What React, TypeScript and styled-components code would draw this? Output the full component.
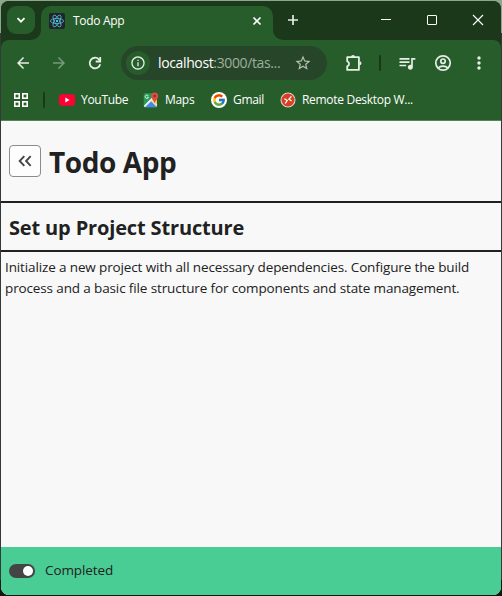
import React from "react";
import styled, { createGlobalStyle } from "styled-components";
import {
  MdArrowBack, MdArrowForward, MdInfoOutline, MdStarBorder,
  MdQueueMusic, MdMoreVert,
} from "react-icons/md";
import { FcGoogle } from "react-icons/fc";

const dark = "#1b381b";
const green = "#275d2b";

const GlobalStyle = createGlobalStyle`
  * { box-sizing: border-box; }
  html, body, #root { height: 100%; margin: 0; }
  body { background: linear-gradient(#8da68f 0 33px, #333a37 33px); overflow: hidden; font-family: "Open Sans", sans-serif; }
  svg { display: block; flex: none; }
  h1, h2, p { margin: 0; }
`;

const Window = styled.div`
  height: 100vh;
  padding: 1px;
  background: linear-gradient(#0000 580px, #111814 580px);
`;
const Frame = styled.div`
  height: 100%;
  display: flex;
  flex-direction: column;
  border-radius: 8px;
  overflow: hidden;
  background: ${dark};
`;
const TabStrip = styled.div`
  height: 39px;
  flex: none;
  display: flex;
  background: ${green};
`;
const StripStart = styled.div`
  width: 40px;
  padding: 5px 6px;
  background: ${dark};
  border-bottom-right-radius: 10px;
`;
const TabSearch = styled.div`
  width: 28px;
  height: 28px;
  border-radius: 9px;
  background: ${green};
  display: grid;
  place-items: center;
`;
const TabSlot = styled.div`
  width: 232px;
  padding-top: 5px;
  background: linear-gradient(${dark} 20px, ${green} 20px);
`;
const Tab = styled.div`
  height: 34px;
  padding: 0 11px 5px 8px;
  display: flex;
  align-items: center;
  border-radius: 10px 10px 0 0;
  background: ${green};
  color: #fff;
`;
const Favicon = styled.div`
  width: 16px;
  height: 16px;
  border-radius: 2px;
  background: #20242b;
  margin-right: 8px;
`;
const TabTitle = styled.span`
  flex: 1;
  padding-top: 1px;
  font-size: 12px;
  line-height: 16px;
  letter-spacing: -0.32px;
`;
const StripEnd = styled.div`
  flex: 1;
  display: flex;
  align-items: center;
  padding: 0 0 1px 14px;
  background: ${dark};
  border-bottom-left-radius: 10px;
`;
const WindowControls = styled.div`
  margin-left: auto;
  display: grid;
  grid-template-columns: repeat(3, 46px);
  justify-items: center;
`;
const Chrome = styled.div`
  height: 81px;
  flex: none;
  background: ${green};
  border-radius: 8px 8px 0 0;
  border-bottom: 1px solid #568359;
  color: #e6eee6;
`;
const Toolbar = styled.div`
  height: 46px;
  padding: 0 4px;
  display: flex;
  align-items: center;
`;
const Slot = styled.div<{ $faded?: boolean }>`
  width: 36px;
  display: grid;
  place-items: center;
  opacity: ${(p) => (p.$faded ? 0.42 : 1)};
`;
const Omnibox = styled.div`
  width: 206px;
  height: 34px;
  margin: 0 9px 0 8px;
  padding: 0 15px 0 5px;
  display: flex;
  align-items: center;
  border-radius: 17px;
  background: #274629;
`;
const SiteInfo = styled.div`
  width: 24px;
  height: 24px;
  margin-right: 8px;
  border-radius: 50%;
  background: ${green};
  display: grid;
  place-items: center;
`;
const Url = styled.span`
  flex: 1;
  white-space: nowrap;
  font-size: 14px;
  line-height: 20px;
  letter-spacing: -0.37px;
  color: #9fae9f;
`;
const Host = styled.span`
  color: #fff;
`;
const Divider = styled.div`
  width: 2px;
  height: 16px;
  flex: none;
  border-radius: 1px;
  background: ${dark};
`;
const ToolbarDivider = styled(Divider)`
  margin: 0 8px 0 7px;
`;
const Bookmarks = styled.div`
  height: 28px;
  padding-left: 13px;
  display: flex;
  align-items: center;
  color: #fff;
`;
const BookmarkDivider = styled(Divider)`
  margin: 0 14px 0 15px;
`;
const Bookmark = styled.div<{ $width: number }>`
  width: ${(p) => p.$width}px;
  display: flex;
  align-items: center;
  gap: 6px;
  white-space: nowrap;
  font-size: 12px;
  line-height: 16px;
  letter-spacing: -0.3px;
`;
const Page = styled.main`
  flex: 1;
  display: flex;
  flex-direction: column;
  background: #f8f8f8;
  color: #212121;
`;
const Header = styled.header`
  height: 82px;
  padding-left: 8px;
  display: flex;
  align-items: center;
  gap: 8px;
  border-bottom: 2px solid #212121;
`;
const BackButton = styled.button`
  width: 32px;
  height: 32px;
  padding: 0;
  display: grid;
  place-items: center;
  border: 1px solid #8b8b8b;
  border-radius: 4px;
  background: #fdfdfd;
  color: #444;
`;
const AppTitle = styled.h1`
  padding-top: 2px;
  font-size: 28px;
  line-height: 36px;
  font-weight: 700;
  letter-spacing: -0.42px;
`;
const TaskTitle = styled.h2`
  height: 49px;
  padding: 0 8px;
  font-size: 20px;
  line-height: 49px;
  font-weight: 700;
  letter-spacing: -0.15px;
  border-bottom: 2px solid #212121;
`;
const Description = styled.p`
  flex: 1;
  padding: 5px 4px;
  font-size: 13.5px;
  line-height: 21px;
  letter-spacing: -0.13px;
  white-space: nowrap;
`;
const StatusBar = styled.footer`
  height: 48px;
  padding-left: 8px;
  display: flex;
  align-items: center;
  gap: 10px;
  background: #4acd94;
  font-size: 13.5px;
  letter-spacing: -0.1px;
`;
const StatusText = styled.span`
  padding-bottom: 2px;
`;
const Switch = styled.div`
  width: 26px;
  height: 14px;
  padding: 2px;
  display: flex;
  justify-content: flex-end;
  border-radius: 7px;
  background: #444;
`;
const Knob = styled.div`
  width: 10px;
  height: 10px;
  border-radius: 50%;
  background: #fff;
`;
const GoogleDisc = styled.span`
  width: 16px;
  height: 16px;
  border-radius: 50%;
  background: #fff;
  display: grid;
  place-items: center;
`;

const ReactLogo = () => (
  <svg width="16" height="16" viewBox="-8 -8 16 16" fill="none" stroke="#57bdd8" strokeWidth="0.8">
    <circle r="1.2" fill="#57bdd8" stroke="none" />
    {[0, 60, 120].map((a) => <ellipse key={a} rx="6.6" ry="2.6" transform={`rotate(${a})`} />)}
  </svg>
);
const ReloadIcon = () => (
  <svg width="16" height="16" viewBox="0 0 16 16" fill="none" stroke="currentColor" strokeWidth="1.8">
    <path d="M13.2 9.2A5.3 5.3 0 1 1 11.9 4.4L13 5.6" />
    <path d="M13.2 2v4.5H8.7" />
  </svg>
);
const PuzzleIcon = () => (
  <svg width="20" height="20" viewBox="0 0 20 20" fill="none">
    <path d="M3.2 4.2h11.7v12.7H3.2v-3.6a2.6 2.6 0 0 0 0-5z" stroke="currentColor" strokeWidth="1.8" strokeLinejoin="round" />
    <path d="M7 4a2 2 0 0 1 4 0zM15.5 8.3a2 2 0 0 1 0 4z" fill="currentColor" />
  </svg>
);
const ProfileIcon = () => (
  <svg width="18" height="18" viewBox="0 0 18 18" fill="none" stroke="currentColor" strokeWidth="1.7">
    <circle cx="9" cy="9" r="7.2" />
    <circle cx="9" cy="7.2" r="2.2" />
    <path d="M4 14c1.4-1.3 3.1-1.9 5-1.9s3.6.6 5 1.9" />
  </svg>
);
const BackIcon = () => (
  <svg width="14" height="12" viewBox="0 0 14 12" fill="none" stroke="currentColor" strokeWidth="1.9">
    <path d="M6.3 1.2 1.7 6l4.6 4.8M12.7 1.2 8.1 6l4.6 4.8" />
  </svg>
);
const YouTubeIcon = () => (
  <svg width="16" height="16" viewBox="0 0 16 16">
    <rect y="2.2" width="16" height="11.6" rx="3" fill="#ff0033" />
    <path d="M6.3 5.6v4.8L10.6 8z" fill="#fff" />
  </svg>
);
const MapsIcon = () => (
  <svg width="16" height="16" viewBox="0 0 16 16">
    <rect x=".7" y="1.3" width="13.3" height="14" rx="1.5" fill="#279b55" />
    <path d="M1 14.5 12 3l2 2v9.5z" fill="#f4c63d" />
    <path d="M1.5 15.3 7.6 9l6.2 6.3z" fill="#4688ed" />
    <path d="m8.2 8.8 1.2-1.1L14 12.4v2.4z" fill="#dfe4e5" />
    <path d="M.8 13.8 10.5 4l1.5 1.3L2 15.3z" fill="#eee" />
    <path d="M5.4 4.1a1.7 1.7 0 1 0 .1 1.1H4" fill="none" stroke="#fff" strokeWidth=".8" />
    <path d="M11.5 11.5C11.2 8.4 8.2 7.3 8.2 4a3.5 3.5 0 1 1 7 0c0 3.3-3.1 4.4-3.7 7.5z" fill="#df4d40" />
    <circle cx="11.7" cy="4" r="1.2" fill="#852c27" />
  </svg>
);
const RemoteIcon = () => (
  <svg width="16" height="16" viewBox="0 0 16 16">
    <circle cx="8" cy="8" r="7" fill="#d64025" stroke="#e7ccc5" strokeWidth="1.1" />
    <path d="m4.4 6.8 2.8 1.7-2 3M11.4 4.4 8.9 7.1l2.7 2" fill="none" stroke="#fff" strokeWidth="1.3" />
  </svg>
);
const AppsIcon = () => (
  <svg width="14" height="14" viewBox="0 0 14 14" fill="none" stroke="currentColor" strokeWidth="1.6">
    {[[0.8, 0.8], [8.8, 0.8], [0.8, 8.8], [8.8, 8.8]].map(([x, y]) => (
      <rect key={`${x}-${y}`} x={x} y={y} width="4.4" height="4.4" />
    ))}
  </svg>
);

export default function App() {
  return (
    <Window>
      <GlobalStyle />
      <Frame>
        <TabStrip>
          <StripStart>
            <TabSearch>
              <svg width="10" height="10" viewBox="0 0 10 10" fill="none" stroke="#fff" strokeWidth="1.8"><path d="m1.5 3.2 3.5 3.5 3.5-3.5" /></svg>
            </TabSearch>
          </StripStart>
          <TabSlot>
            <Tab>
              <Favicon><ReactLogo /></Favicon>
              <TabTitle>Todo App</TabTitle>
              <svg width="10" height="10" viewBox="0 0 10 10" stroke="#fff" strokeWidth="1.7"><path d="m1.5 1.5 7 7m0-7-7 7" /></svg>
            </Tab>
          </TabSlot>
          <StripEnd>
            <svg width="12" height="12" viewBox="0 0 12 12" stroke="#e6eee6" strokeWidth="1.7"><path d="M6 1v10M1 6h10" /></svg>
            <WindowControls>
              <svg width="12" height="12" viewBox="0 0 12 12" stroke="#fff"><path d="M1 5.5h10" /></svg>
              <svg width="12" height="12" viewBox="0 0 12 12" stroke="#fff" fill="none"><rect x="1.5" y="1.5" width="9" height="9" rx=".5" /></svg>
              <svg width="12" height="12" viewBox="0 0 12 12" stroke="#fff" strokeWidth="1.1"><path d="m1 1 10 10m0-10L1 11" /></svg>
            </WindowControls>
          </StripEnd>
        </TabStrip>
        <Chrome>
          <Toolbar>
            <Slot><MdArrowBack size={18} /></Slot>
            <Slot $faded><MdArrowForward size={18} /></Slot>
            <Slot><ReloadIcon /></Slot>
            <Omnibox>
              <SiteInfo><MdInfoOutline size={16} /></SiteInfo>
              <Url><Host>localhost</Host>:3000/tas...</Url>
              <MdStarBorder size={18} color="#b3c0b3" />
            </Omnibox>
            <Slot><PuzzleIcon /></Slot>
            <ToolbarDivider />
            <Slot><MdQueueMusic size={20} /></Slot>
            <Slot><ProfileIcon /></Slot>
            <Slot><MdMoreVert size={20} /></Slot>
          </Toolbar>
          <Bookmarks>
            <AppsIcon />
            <BookmarkDivider />
            <Bookmark $width={84}><YouTubeIcon />YouTube</Bookmark>
            <Bookmark $width={68}><MapsIcon />Maps</Bookmark>
            <Bookmark $width={69}><GoogleDisc><FcGoogle size={14} /></GoogleDisc>Gmail</Bookmark>
            <Bookmark $width={140}><RemoteIcon />Remote Desktop W...</Bookmark>
          </Bookmarks>
        </Chrome>
        <Page>
          <Header>
            <BackButton aria-label="Back"><BackIcon /></BackButton>
            <AppTitle>Todo App</AppTitle>
          </Header>
          <TaskTitle>Set up Project Structure</TaskTitle>
          <Description>
            Initialize a new project with all necessary dependencies. Configure the build<br />
            process and a basic file structure for components and state management.
          </Description>
          <StatusBar>
            <Switch><Knob /></Switch>
            <StatusText>Completed</StatusText>
          </StatusBar>
        </Page>
      </Frame>
    </Window>
  );
}
